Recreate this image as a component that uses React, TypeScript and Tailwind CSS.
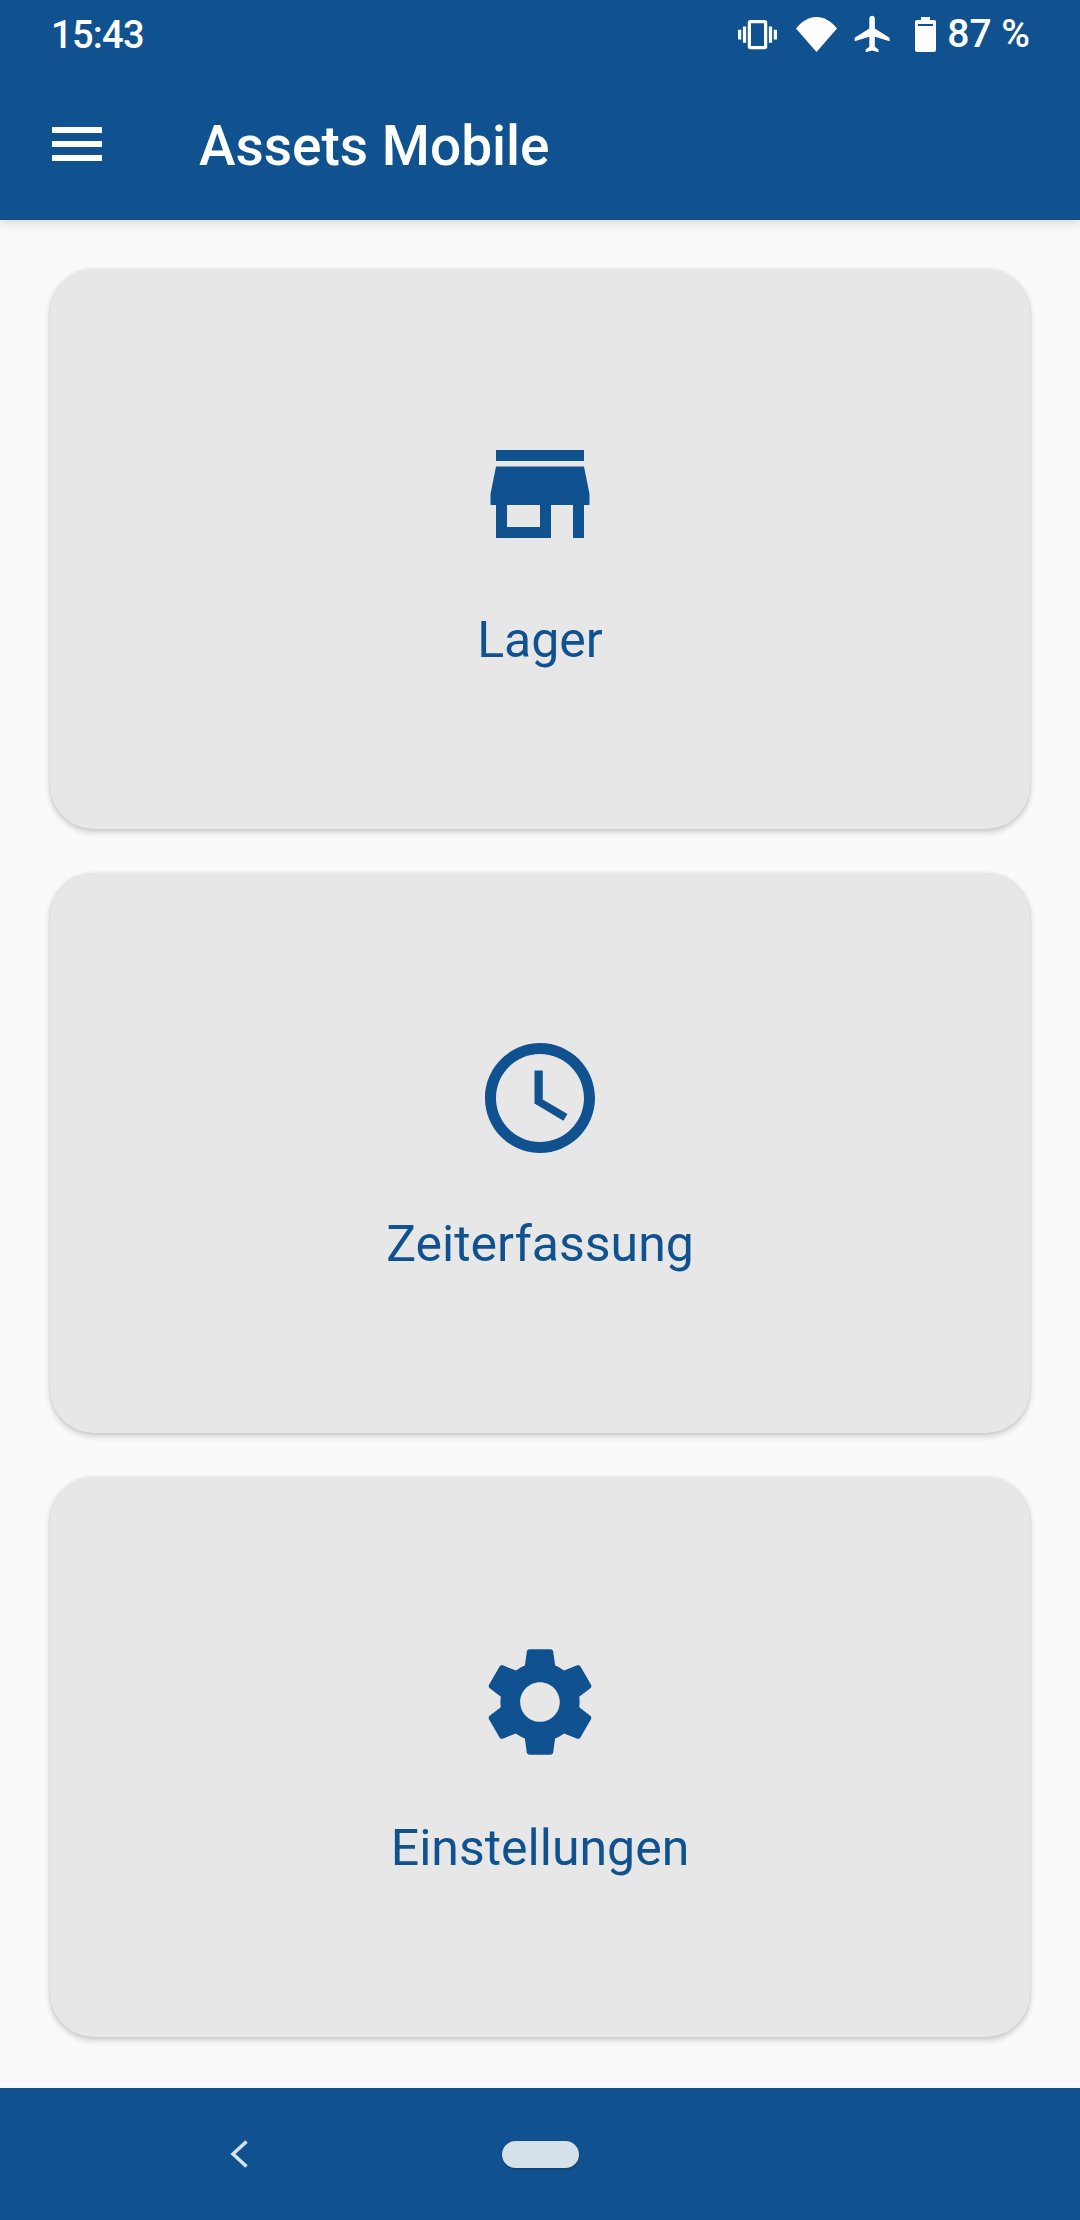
import type { ReactNode } from 'react';

const storePath = 'M20 4H4v2h16V4zm1 10v-2l-1-5H4l-1 5v2h1v6h10v-6h4v6h2v-6h1zm-9 4H6v-4h6v4z';
const clockPath = 'M11.99 2C6.47 2 2 6.48 2 12s4.47 10 9.99 10C17.52 22 22 17.52 22 12S17.52 2 11.99 2zM12 20c-4.42 0-8-3.58-8-8s3.58-8 8-8 8 3.58 8 8-3.58 8-8 8zm.5-13H11v6l5.25 3.15.75-1.23-4.5-2.67z';
const gearPath = 'M19.14 12.94c.04-.3.06-.61.06-.94 0-.32-.02-.64-.07-.94l2.03-1.58c.18-.14.23-.41.12-.61l-1.92-3.32c-.12-.22-.37-.29-.59-.22l-2.39.96c-.5-.38-1.03-.7-1.62-.94l-.36-2.54c-.04-.24-.24-.41-.48-.41h-3.84c-.24 0-.43.17-.47.41l-.36 2.54c-.59.24-1.13.57-1.62.94l-2.39-.96c-.22-.08-.47 0-.59.22L2.74 8.87c-.12.21-.08.47.12.61l2.03 1.58c-.05.3-.09.63-.09.94s.02.64.07.94l-2.03 1.58c-.18.14-.23.41-.12.61l1.92 3.32c.12.22.37.29.59.22l2.39-.96c.5.38 1.03.7 1.62.94l.36 2.54c.05.24.24.41.48.41h3.84c.24 0 .44-.17.47-.41l.36-2.54c.59-.24 1.13-.56 1.62-.94l2.39.96c.22.08.47 0 .59-.22l1.92-3.32c.12-.22.07-.47-.12-.61l-2.01-1.58zM12 15.6c-1.98 0-3.6-1.62-3.6-3.6s1.62-3.6 3.6-3.6 3.6 1.62 3.6 3.6-1.62 3.6-3.6 3.6z';

const MenuCard = ({ path, label }: { path: string; label: string }) => (
    <div className="flex h-[560px] flex-col items-center rounded-[44px] bg-[#e7e7e7] pt-[159px] shadow-[0_3px_6px_rgba(0,0,0,0.2),0_0_3px_rgba(0,0,0,0.08)]">
        <svg width="132" height="132" viewBox="0 0 24 24" className="fill-[#10528f]">
            <path d={path} />
        </svg>
        <span className="mt-[51px] text-[50px] leading-[58px] text-[#10528f]">{label}</span>
    </div>
);

const StatusIcon = ({ size, children }: { size: number; children: ReactNode }) => (
    <svg width={size} height={size} viewBox="0 0 24 24" className="fill-white">
        {children}
    </svg>
);

export default function App() {
    return (
        <div className="flex h-[2220px] w-[1080px] flex-col bg-[#fafafa] font-['Roboto',sans-serif]">
            <header className="z-10 h-[220px] bg-[#10528f] shadow-[0_3px_10px_rgba(0,0,0,0.14)]">
                <div className="flex h-[68px] items-center justify-between pl-[51px] pr-[50px] text-white">
                    <span className="pt-[2px] text-[38px] font-medium leading-none tracking-[-0.7px]">15:43</span>
                    <div className="flex items-center">
                        <StatusIcon size={39}>
                            <path d="M0 15h2V9H0v6zm3 2h2V7H3v10zm19-8v6h2V9h-2zm-3 8h2V7h-2v10zM16.5 3h-9C6.67 3 6 3.67 6 4.5v15c0 .83.67 1.5 1.5 1.5h9c.83 0 1.5-.67 1.5-1.5v-15c0-.83-.67-1.5-1.5-1.5zM16 19H8V5h8v14z" />
                        </StatusIcon>
                        <svg width="41" height="35" viewBox="0 0 41 35" className="ml-[19px] fill-white">
                            <path d="M20.5 35 0 11.5C5.5 4.5 12.5 0 20.5 0S35.5 4.5 41 11.5L20.5 35z" />
                        </svg>
                        <div className="ml-[14px]">
                            <StatusIcon size={44}>
                                <path d="M21 16v-2l-8-5V3.5c0-.83-.67-1.5-1.5-1.5S10 2.67 10 3.5V9l-8 5v2l8-2.5V19l-2 1.5V22l3.5-1 3.5 1v-1.5L13 19v-5.5l8 2.5z" />
                            </StatusIcon>
                        </div>
                        <svg width="21" height="35" viewBox="0 0 21 35" className="ml-[20px] fill-white">
                            <path
                                fillRule="evenodd"
                                d="M6 0h9v3h4a2 2 0 0 1 2 2v28a2 2 0 0 1-2 2H2a2 2 0 0 1-2-2V5a2 2 0 0 1 2-2h4V0zM3 7v2h15V7H3z"
                            />
                        </svg>
                        <span className="ml-[11px] text-[39px] font-medium leading-none">87 %</span>
                    </div>
                </div>
                <div className="flex h-[152px] items-center pl-[52px]">
                    <svg width="50" height="34" viewBox="0 0 50 34" className="fill-white">
                        <rect width="50" height="6" y="0" />
                        <rect width="50" height="6" y="14" />
                        <rect width="50" height="6" y="28" />
                    </svg>
                    <h1 className="ml-[97px] pt-[5px] text-[55px] font-medium leading-none text-white">Assets Mobile</h1>
                </div>
            </header>

            <main className="flex flex-1 flex-col gap-[44px] px-[50px] pt-[49px]">
                <MenuCard path={storePath} label="Lager" />
                <MenuCard path={clockPath} label="Zeiterfassung" />
                <MenuCard path={gearPath} label="Einstellungen" />
            </main>

            <nav className="flex h-[132px] items-center bg-[#10528f] pl-[230px]">
                <svg width="18" height="28" viewBox="0 0 18 28" fill="none" className="stroke-[#d5e3f0]">
                    <path d="M16.5 1.5 3 14l13.5 12.5" strokeWidth="3.5" />
                </svg>
                <div className="ml-[254px] h-[27px] w-[77px] rounded-full bg-[#d5e0ea] shadow-[0_1px_2px_rgba(0,0,0,0.3)]" />
            </nav>
        </div>
    );
}
